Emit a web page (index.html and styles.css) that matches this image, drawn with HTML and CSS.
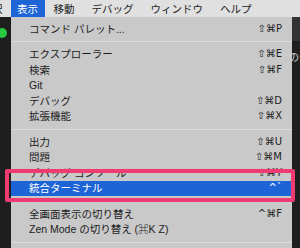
FILE: index.html
```html
<!DOCTYPE html>
<html>
<head>
    <meta charset="UTF-8">
    <title>表示メニュー</title>
<link rel="stylesheet" href="styles.css">
</head>
<body>
  <div class="screen">
    <div class="menubar">
      <span class="mb-item mb-cut">選択</span>
      <span class="mb-item mb-active">表示</span>
      <span class="mb-item">移動</span>
      <span class="mb-item">デバッグ</span>
      <span class="mb-item">ウィンドウ</span>
      <span class="mb-item">ヘルプ</span>
    </div>
    <div class="main">
      <div class="side-left"><div class="dot"></div></div>
      <div class="menu">
        <div class="item"><span>コマンド パレット...</span><span class="key">⇧⌘P</span></div>
        <div class="sep"></div>
        <div class="item"><span>エクスプローラー</span><span class="key">⇧⌘E</span></div>
        <div class="item"><span>検索</span><span class="key">⇧⌘F</span></div>
        <div class="item"><span>Git</span></div>
        <div class="item"><span>デバッグ</span><span class="key">⇧⌘D</span></div>
        <div class="item"><span>拡張機能</span><span class="key">⇧⌘X</span></div>
        <div class="sep"></div>
        <div class="item"><span>出力</span><span class="key">⇧⌘U</span></div>
        <div class="item"><span>問題</span><span class="key">⇧⌘M</span></div>
        <div class="item"><span>デバッグ コンソール</span><span class="key">⇧⌘Y</span></div>
        <div class="item active"><span>統合ターミナル</span><span class="key">^`</span></div>
        <div class="sep"></div>
        <div class="item"><span>全画面表示の切り替え</span><span class="key">^⌘F</span></div>
        <div class="item"><span>Zen Mode の切り替え (⌘K Z)</span></div>
        <div class="sep"></div>
      </div>
      <div class="side-right">
        <div class="side-right-top"></div>
        <span class="side-text">のせ</span>
      </div>
    </div>
    <div class="callout"></div>
  </div>
</body>
</html>
```

FILE: styles.css
```css
body {
  margin: 0;
  font-family: "Liberation Sans", "Noto Sans CJK JP", sans-serif;
  color: #1c1c1c;
}

.screen {
  position: relative;
  width: 300px;
  height: 248px;
  overflow: hidden;
  background-color: #1e1e1e;
}

.menubar {
  display: flex;
  align-items: center;
  height: 17px;
  background-color: #e0e0e0;
  font-size: 10.5px;
}

.mb-item {
  display: flex;
  align-items: center;
  height: 17px;
  padding: 0 8.5px;
  white-space: nowrap;
}

.mb-cut {
  margin-left: -27px;
}

.mb-active {
  background-color: #1d64d7;
  color: #fff;
  padding: 0 7px 0 6px;
}

.main {
  display: flex;
  height: 231px;
}

.side-left {
  width: 11px;
  background-color: #1e1e1e;
  padding-top: 11px;
  box-sizing: border-box;
}

.dot {
  width: 10px;
  height: 10px;
  margin-left: -3px;
  border-radius: 50%;
  background-color: #27c93f;
}

.menu {
  flex: 1;
  padding-top: 4px;
  background-color: #c9c9c9;
  font-size: 10.5px;
}

.item {
  display: flex;
  align-items: center;
  justify-content: space-between;
  height: 15.5px;
  padding: 0 10px 0 18px;
  line-height: 1;
  white-space: nowrap;
}

.item.active {
  background-color: #1d64d7;
  color: #fff;
}

.key {
  font-family: "DejaVu Sans", "Noto Sans CJK JP", sans-serif;
  font-size: 10px;
}

.sep {
  height: 1px;
  margin: 4.5px 0;
  background-color: #dcdcdc;
}

.side-right {
  width: 8px;
  background-color: #1e1e1e;
  overflow: hidden;
  font-size: 10px;
  color: #ddd;
}

.side-right-top {
  height: 24px;
  background-color: #333;
}

.side-text {
  display: block;
  margin-top: 8px;
  margin-left: -3px;
  white-space: nowrap;
  font-family: "Noto Sans CJK JP", sans-serif;
}

/* 注目枠 */
.callout {
  position: absolute;
  left: 5px;
  top: 169px;
  width: 290px;
  height: 33px;
  box-sizing: border-box;
  border: 4px solid #f03a72;
  border-radius: 2px;
}
```
